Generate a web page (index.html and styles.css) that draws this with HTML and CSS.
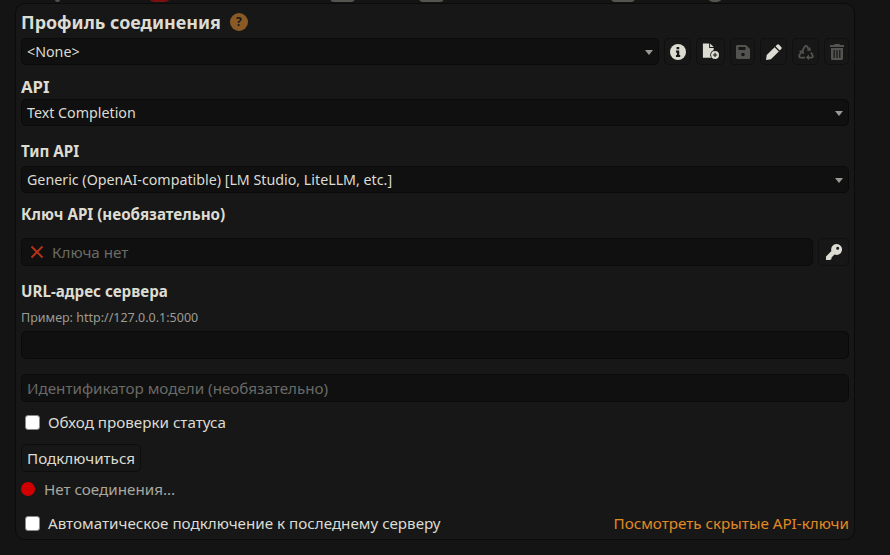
FILE: index.html
```html
<!doctype html>
<html lang="ru">
<head>
    <meta charset="UTF-8">
    <title>Connection profile</title>
    <link rel="stylesheet" href="styles.css">
</head>
<body>
    <div class="topbar">
        <span class="tip tip-a"></span>
        <span class="tip tip-red"></span>
        <span class="tip tip-b"></span>
        <span class="tip tip-c"></span>
        <span class="tip tip-d"></span>
        <span class="tip tip-e"></span>
    </div>
    <div class="panel">
        <div class="title-row">
            <h3 class="title">Профиль соединения</h3>
            <span class="help">?</span>
        </div>
        <div class="profile-row">
            <div class="field select grow">&lt;None&gt;<span class="caret"></span></div>
            <div class="icon-btn btn-27">
                <svg width="16" height="16" viewBox="0 0 18 18"><circle cx="9" cy="9" r="9" fill="#dcdcd2"/><path d="M7.400 3.400h3v2.600h-3zM6.700 7.400h3.700v5h1.100v2.100H6.700v-2.100h1.100V9.500H6.700z" fill="#171717"/></svg>
            </div>
            <div class="icon-btn btn-29">
                <svg width="18" height="17" viewBox="0 0 20 18"><path d="M1 0h7v5h5v11H1z" fill="#dcdcd2"/><path d="M9 0l4 4H9z" fill="#dcdcd2"/><circle cx="14.500" cy="12.800" r="5.400" fill="#171717"/><circle cx="14.500" cy="12.800" r="4.400" fill="#dcdcd2"/><path d="M13.900 10.400h1.200v1.800h1.800v1.200h-1.800v1.800h-1.200v-1.800h-1.800v-1.200h1.800z" fill="#171717"/></svg>
            </div>
            <div class="icon-btn btn-25 faded">
                <svg width="14" height="14" viewBox="0 0 14 14"><path d="M1.500 0H10l4 4v8.500a1.500 1.500 0 0 1-1.500 1.500h-11A1.500 1.500 0 0 1 0 12.500v-11A1.500 1.500 0 0 1 1.500 0z" fill="#dcdcd2"/><path d="M2.500 2h7v3h-7z" fill="#171717"/><circle cx="7" cy="9.500" r="1.800" fill="#171717"/></svg>
            </div>
            <div class="icon-btn btn-27">
                <svg width="16" height="16" viewBox="0 0 16 16"><path d="M11 .8a1.500 1.500 0 0 1 2.100 0l2.100 2.100a1.500 1.500 0 0 1 0 2.100l-1.500 1.500-4.200-4.200zM8.600 3.200l4.200 4.200-7.900 7.900-4.900.7.700-4.900z" fill="#dcdcd2"/></svg>
            </div>
            <div class="icon-btn btn-27 faded">
                <svg width="16" height="16" viewBox="0 0 16 16"><path d="M4.600 6.400 6.800 2.600Q8 1 9.200 2.600L10.400 4.800M13 8.500 14.600 11.400Q15.400 13.400 13.200 13.600H10.800M7 13.600H3Q.6 13.400 1.400 11.200L3 8.500" fill="none" stroke="#dcdcd2" stroke-width="1.800"/><path d="M12.800 6.900 8.500 6.400 12.200 3zM11 10.600V16L7.800 13.400zM.6 7 5.600 6 6 10.600z" fill="#dcdcd2"/></svg>
            </div>
            <div class="icon-btn btn-25 faded">
                <svg width="14" height="16" viewBox="0 0 14 16"><path d="M4.500 0h5l.5 1h4v2H0V1h4zM1 4h12v10.500a1.500 1.500 0 0 1-1.500 1.500h-9A1.500 1.500 0 0 1 1 14.500z" fill="#dcdcd2"/><path d="M3.600 6h1.200v8H3.600zM6.400 6h1.200v8H6.400zM9.200 6h1.200v8H9.200z" fill="#171717"/></svg>
            </div>
        </div>

        <h3 class="heading">API</h3>
        <div class="field select">Text Completion<span class="caret"></span></div>

        <h4 class="label label-type">Тип API</h4>
        <div class="field select">Generic (OpenAI-compatible) [LM Studio, LiteLLM, etc.]<span class="caret"></span></div>

        <h4 class="label label-key">Ключ API (необязательно)</h4>
        <div class="key-row">
            <div class="field tall grow muted ru">
                <svg class="cross" width="14" height="14" viewBox="0 0 14 14"><path d="M1.500 1.500l11 11M12.500 1.500l-11 11" stroke="#b5321a" stroke-width="2" fill="none"/></svg>
                Ключа нет
            </div>
            <div class="icon-btn key-btn">
                <svg width="16" height="16" viewBox="0 0 16 16"><path fill-rule="evenodd" d="M10.500 0a5.500 5.500 0 1 1-2 10.600L5.500 13.500V15l-1.500 1H0v-3.500l5.400-5.400A5.500 5.500 0 0 1 10.500 0zm1.200 2.700a1.500 1.500 0 1 0 0 3 1.500 1.500 0 0 0 0-3z" fill="#dcdcd2"/></svg>
            </div>
        </div>

        <h4 class="label label-url">URL-адрес сервера</h4>
        <small class="hint">Пример: http://127.0.0.1:5000</small>
        <div class="field tall"></div>
        <div class="field tall muted model ru">Идентификатор модели (необязательно)</div>

        <label class="check check-bypass ru"><span class="box"></span>Обход проверки статуса</label>
        <div class="connect ru">Подключиться</div>
        <div class="status ru"><span class="dot"></span>Нет соединения...</div>
        <div class="bottom-row ru">
            <label class="check"><span class="box"></span>Автоматическое подключение к последнему серверу</label>
            <span class="link">Посмотреть скрытые API-ключи</span>
        </div>
    </div>
</body>
</html>
```

FILE: styles.css
```css
* {
    box-sizing: border-box;
    margin: 0;
    padding: 0;
}
body {
    background: #141414;
    color: #dcdcd2;
    font-family: 'Noto Sans', sans-serif;
    font-size: 14.25px;
    height: 555px;
    overflow: hidden;
}
.ru {
    font-size: 15.2px;
}
.topbar {
    position: relative;
    height: 3px;
    overflow: hidden;
}
.tip {
    position: absolute;
    top: -8px;
    height: 10px;
    border-radius: 4px;
    background: #55554f;
}
.tip-a { left: 55px; width: 5px; }
.tip-red { left: 149px; width: 21px; background: #7a1010; border-radius: 8px; }
.tip-b { left: 330px; width: 25px; }
.tip-c { left: 419px; width: 25px; }
.tip-d { left: 611px; width: 24px; }
.tip-e { left: 708px; width: 14px; border-radius: 7px; }
.panel {
    width: 840px;
    height: 537px;
    margin-left: 15px;
    padding: 0 5px;
    background: #171717;
    border: 1px solid #0b0b0b;
    border-radius: 10px;
}
.title-row {
    display: flex;
    align-items: center;
    gap: 9px;
    height: 24px;
    margin-top: 6px;
}
.title {
    font-size: 17.9px;
    font-weight: 700;
    line-height: 24px;
}
.help {
    width: 18px;
    height: 18px;
    border-radius: 50%;
    background: #8a5a24;
    color: #171717;
    font-size: 12px;
    font-weight: 700;
    line-height: 18px;
    text-align: center;
}
.profile-row {
    display: flex;
    gap: 5px;
    margin-top: 4px;
}
.key-row {
    display: flex;
    gap: 5px;
}
.grow {
    flex: 1;
}
.field {
    position: relative;
    display: flex;
    align-items: center;
    height: 27px;
    padding: 0 5px;
    background: #101010;
    border: 1px solid #0a0a0a;
    border-radius: 5px;
    white-space: nowrap;
}
.field.tall {
    height: 28px;
}
.muted {
    color: #6a6a66;
}
.caret {
    position: absolute;
    right: 5px;
    top: 11px;
    border-left: 4px solid transparent;
    border-right: 4px solid transparent;
    border-top: 5px solid #9a9a94;
}
.cross {
    margin: 0 8px 0 3px;
}
.icon-btn {
    display: flex;
    align-items: center;
    justify-content: center;
    height: 27px;
    background: #171717;
    border: 1px solid #101010;
    border-radius: 5px;
}
.icon-btn.faded svg {
    opacity: 0.3;
}
.btn-25 { width: 25px; }
.btn-27 { width: 27px; }
.btn-29 { width: 29px; }
.key-btn {
    width: 31px;
    height: 28px;
}
.heading {
    font-size: 16.8px;
    font-weight: 700;
    line-height: 24px;
    margin-top: 10px;
}
.label {
    font-size: 15.2px;
    font-weight: 700;
    line-height: 20px;
}
.label-type {
    margin: 15px 0 5px;
}
.label-key {
    margin: 11px 0 14px;
}
.label-url {
    margin: 15px 0 8px;
}
.hint {
    display: block;
    color: #9c9c94;
    font-size: 12.5px;
    line-height: 18px;
    margin-bottom: 4px;
}
.model {
    margin-top: 15px;
}
.check {
    display: flex;
    align-items: center;
    gap: 8px;
    line-height: 20px;
}
.check-bypass {
    margin: 10px 0 0 4px;
}
.box {
    width: 15px;
    height: 15px;
    background: #fff;
    border: 1px solid #8a8a80;
    border-radius: 3px;
}
.connect {
    width: 120px;
    height: 28px;
    margin-top: 12px;
    background: #171717;
    border: 1px solid #0d0d0d;
    border-radius: 5px;
    line-height: 26px;
    text-align: center;
}
.status {
    display: flex;
    align-items: center;
    gap: 9px;
    height: 20px;
    margin-top: 7px;
    color: #a8a89e;
}
.dot {
    width: 14px;
    height: 14px;
    border-radius: 50%;
    background: #d00000;
}
.bottom-row {
    display: flex;
    justify-content: space-between;
    align-items: center;
    height: 20px;
    margin-top: 14px;
    padding-left: 4px;
}
.link {
    color: #e18a24;
}
```
